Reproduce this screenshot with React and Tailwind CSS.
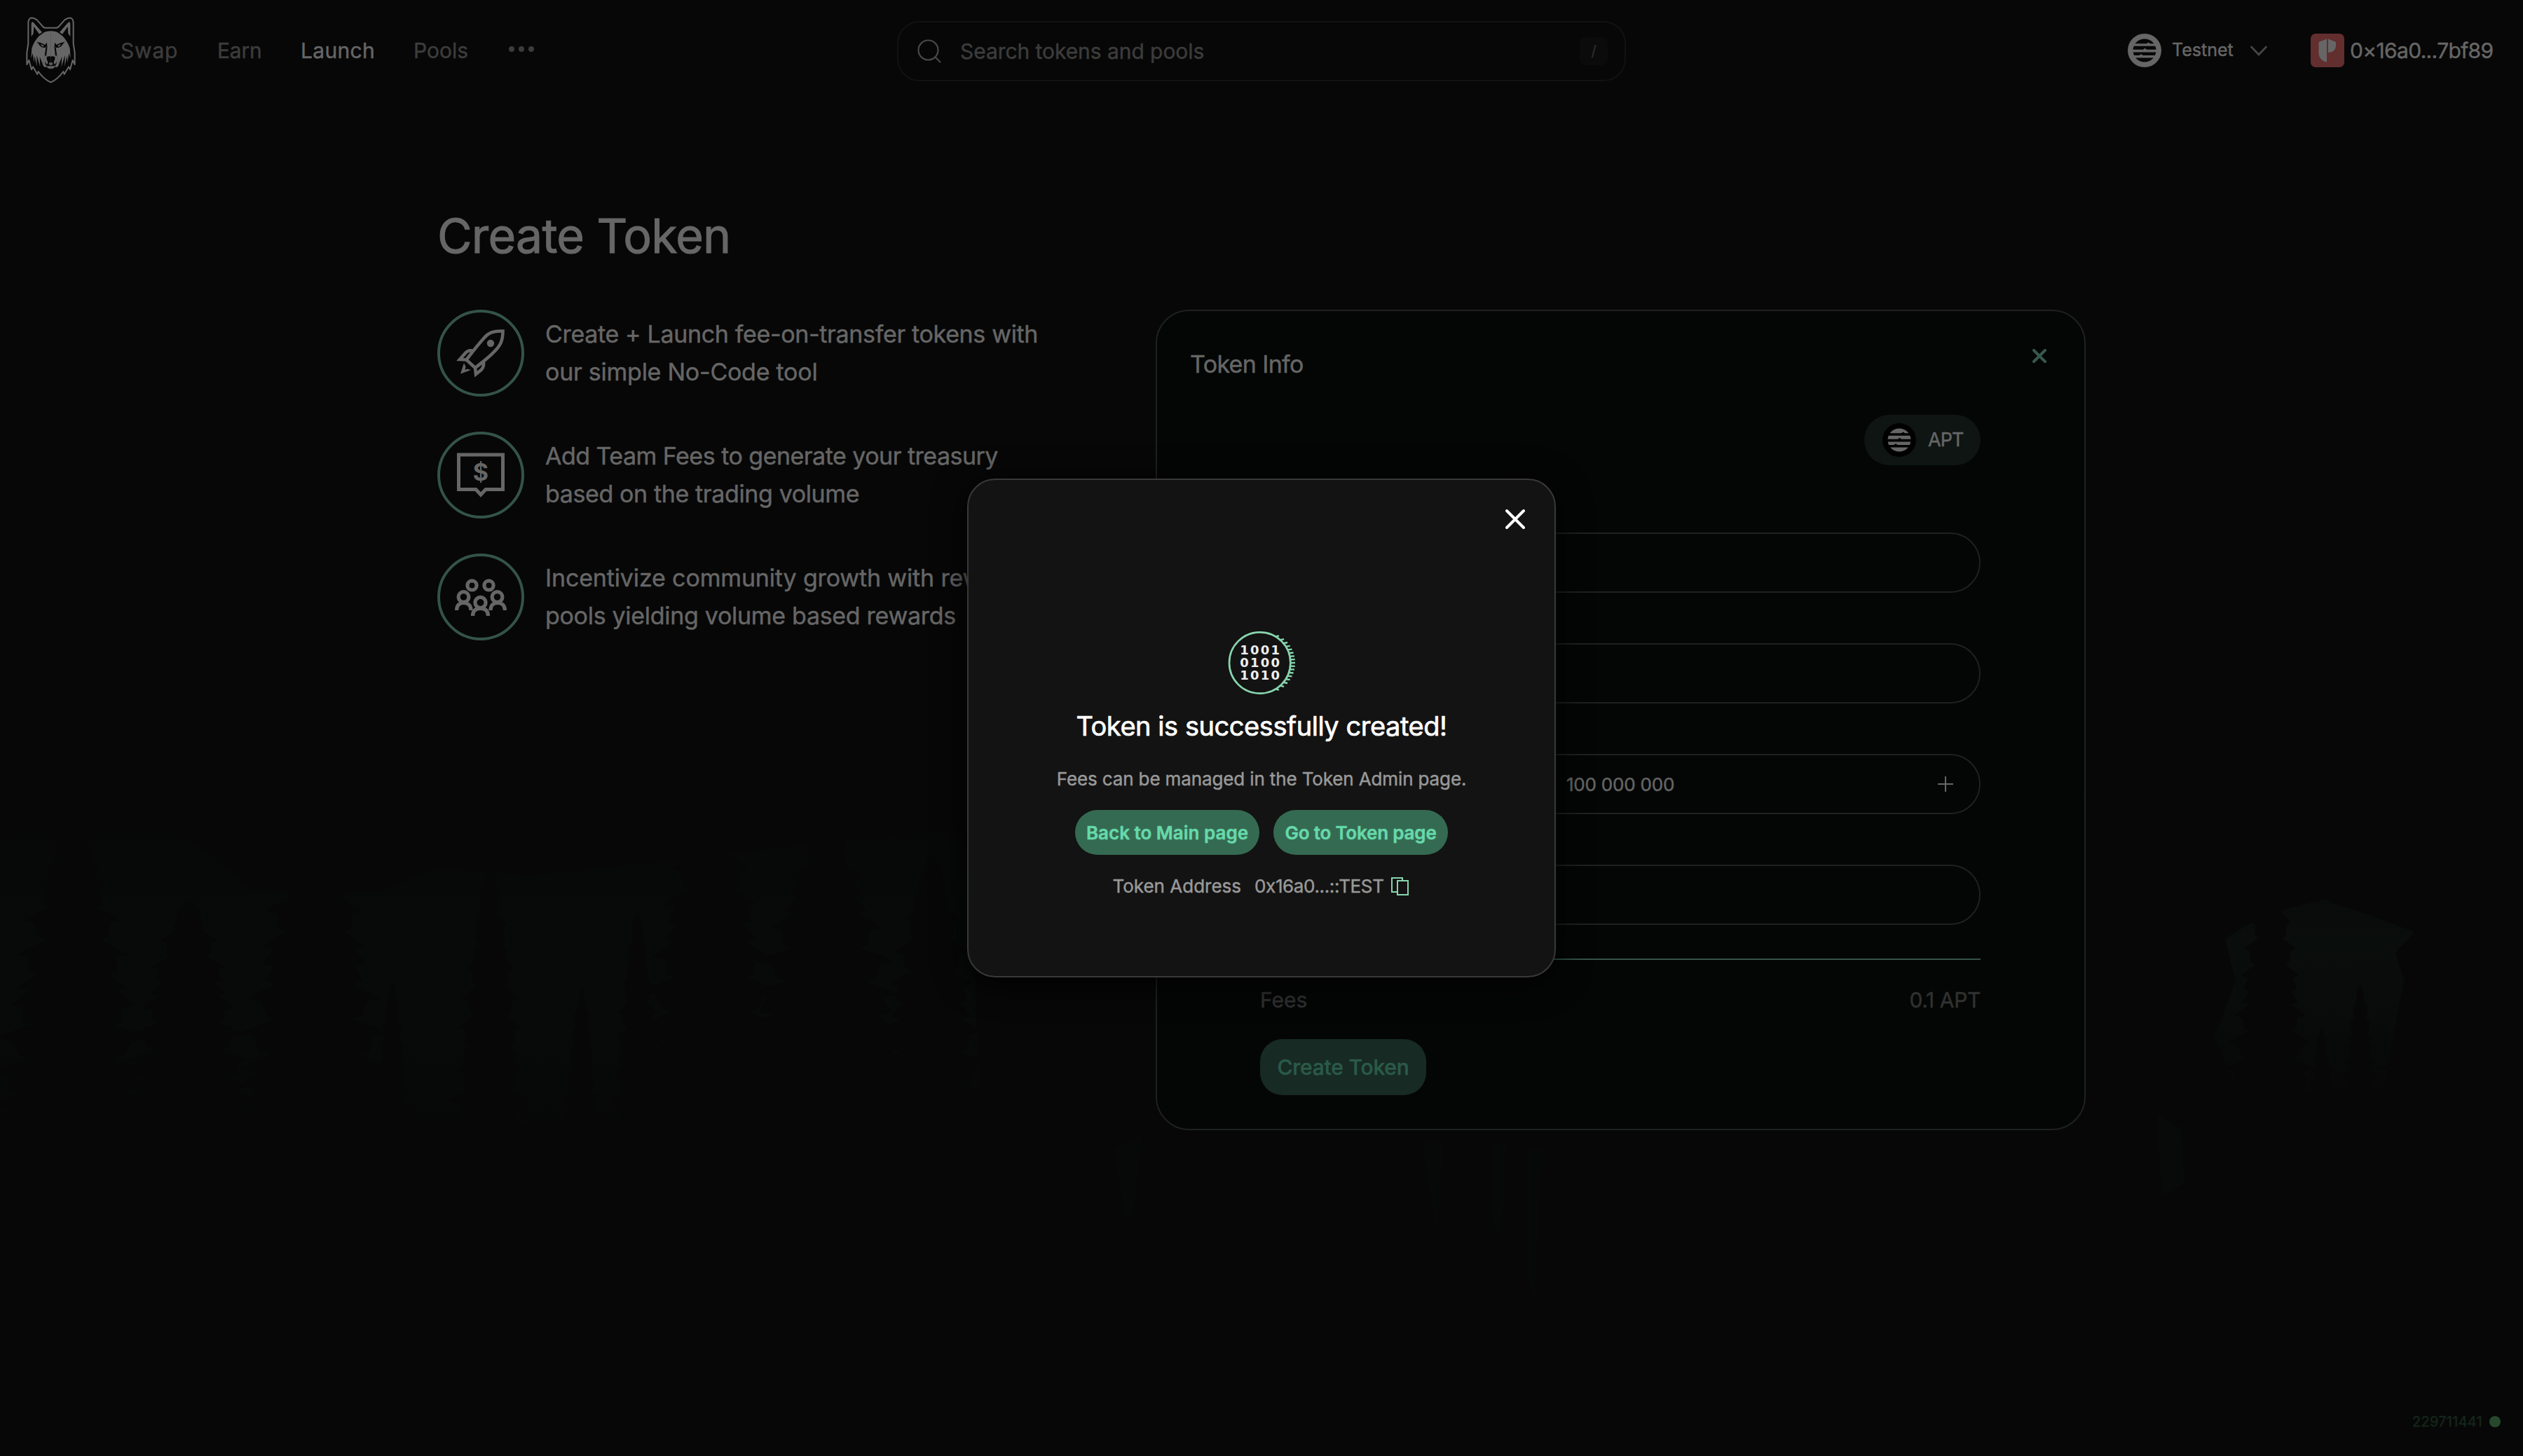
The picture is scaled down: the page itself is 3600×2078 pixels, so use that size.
import React from "react";

/* ---------- backdrop ---------- */

// Jagged conifer silhouette: apex at (x, y), growing to `w` wide over `h`.
function treePath(x, y, w, h) {
  const steps = 20;
  const left = [];
  const right = [];
  for (let i = 1; i <= steps; i++) {
    const wobble = 1 + 0.22 * Math.sin(i * 2.7 + x);
    const half = (w / 2) * Math.pow(i / steps, 0.6) * wobble;
    const yy = y + (h * i) / steps;
    left.unshift(`${x - half * 0.78},${yy + 4}`, `${x - half},${yy}`);
    right.push(`${x + half * 0.95},${yy}`, `${x + half * 0.74},${yy + 4}`);
  }
  return `M${x},${y} L${right.join(" L")} L${left.join(" L")} Z`;
}

const TREES = [
  [105, 1170, 240, 480],
  [270, 1285, 210, 380],
  [450, 1150, 240, 500],
  [560, 1400, 60, 260],
  [700, 1235, 110, 420],
  [830, 1410, 60, 260],
  [910, 1300, 80, 360],
  [1015, 1140, 240, 500],
  [1180, 1180, 290, 480],
  [1330, 1220, 180, 460],
  [2940, 1080, 420, 520],
  [3240, 1240, 130, 380],
  [3313, 1465, 46, 180],
  [3368, 1405, 60, 220],
  [3530, 1150, 270, 500],
];

function Backdrop() {
  return (
    <svg className="absolute inset-0 h-full w-full" viewBox="0 0 3600 2078" aria-hidden="true">
      <defs>
        <linearGradient id="fogL" x1="0" y1="0" x2="0" y2="1">
          <stop offset="0" stopColor="#070a09" stopOpacity="0" />
          <stop offset="0.35" stopColor="#070a09" />
          <stop offset="0.7" stopColor="#070a09" />
          <stop offset="1" stopColor="#070a09" stopOpacity="0" />
        </linearGradient>
        <linearGradient id="fogR" x1="0" y1="0" x2="0" y2="1">
          <stop offset="0" stopColor="#080b0a" />
          <stop offset="0.2" stopColor="#090d0b" />
          <stop offset="0.6" stopColor="#080b0a" />
          <stop offset="1" stopColor="#070707" />
        </linearGradient>
      </defs>
      <path d="M0 1160 L260 1190 L360 1270 L540 1275 L620 1240 L760 1250 L900 1235 L1380 1180 L1400 1600 L0 1620Z" fill="url(#fogL)" />
      <path d="M3175 1340 L3230 1305 L3315 1284 L3380 1306 L3445 1330 L3418 1360 L3430 1400 L3410 1500 L3400 1570 L3200 1570 L3160 1480 L3190 1400Z" fill="url(#fogR)" />
      {TREES.map((t, i) => (
        <path key={i} d={treePath(t[0], t[1], t[2], t[3])} fill="#070707" />
      ))}
      <path d="M3078 1590 L3112 1610 L3118 1690 L3084 1706Z" fill="#070a08" />
      <path d="M1590 1640 L1630 1620 L1616 1740 L1604 1730Z" fill="#070908" />
      <path d="M2030 1630 L2060 1630 L2050 1760 L2040 1700Z M2130 1630 L2150 1632 L2140 1780 L2130 1740Z M2180 1640 L2200 1640 L2190 1860 L2180 1820Z" fill="#070908" />
    </svg>
  );
}

/* ---------- logos and icons ---------- */

function WolfHalf() {
  return (
    <g>
      <path
        d="M182 83 H157 Q150 82 146 76 L122 49 Q104 37 94 42 Q85 47 85 64 L85 150 L79 190 L79 240 L88 222 L99 262 L105 250 L124 282 L128 270 Q150 302 182 317"
        fill="none"
        stroke="#666"
        strokeWidth="6"
        strokeLinejoin="round"
      />
      <path d="M98 66 Q99 54 107 60 L144 102 L132 110 L109 78 L107 108 L98 120Z" fill="#666" />
      <path
        d="M182 97 Q160 97 146 107 L130 119 Q108 144 100 170 L97 214 L104 192 L110 232 L112 204 L122 248 L121 200 L136 250 L134 206 L147 240 Q150 226 155 203 L160 168 L167 160 L162 203 L182 205Z"
        fill="#666"
      />
      <path d="M155 202 L147 240 Q150 252 160 252 L182 252 V204Z" fill="#666" />
      <path d="M121 143 Q140 146 157 156 L164 146 L166 160 L158 168 L150 168 Q134 164 130 152Z" fill="#070707" />
      <path d="M138 152 L153 160 L148 164 Q139 160 138 152Z" fill="#666" />
      <path d="M164 208 Q172 203 182 206 V236 L178 230 Q170 236 176 242 L182 242 V246 H164 Q154 240 158 226 Q160 238 166 240 Q170 236 168 226 L164 220Z" fill="#070707" />
      <path d="M182 248 H160 Q168 260 182 260Z" fill="#070707" />
      <path d="M182 249 H163 Q170 259 182 259Z" fill="#666" />
    </g>
  );
}

function WolfLogo() {
  return (
    <svg className="h-[120px] w-[120px] shrink-0" viewBox="0 0 360 360">
      <WolfHalf />
      <g transform="translate(363 0) scale(-1 1)">
        <WolfHalf />
      </g>
    </svg>
  );
}

function AptosMark({ disc, inner, line }) {
  return (
    <svg className="h-12 w-12 shrink-0" viewBox="0 0 48 48">
      <circle cx="24" cy="24" r="24" fill={disc} />
      <circle cx="24" cy="24" r="16.5" fill={inner} />
      <g fill={line}>
        <path d="M8 14.2 H27 L29.5 12.4 L32 14.2 H40 V17.8 H8Z" />
        <path d="M6.5 22.8 H22 L24.5 20.8 L27 22.8 H41.5 V26.4 H6.5Z" />
        <path d="M8 31 H16.5 L19 29 L21.5 31 H40 V34.6 H8Z" />
      </g>
    </svg>
  );
}

function WalletMark() {
  return (
    <svg className="h-12 w-12 shrink-0" viewBox="0 0 48 48">
      <rect width="48" height="48" rx="7" fill="#632e2e" />
      <path d="M11.5 12 L23 7.5 V40.5 C15.5 39.5 11.5 33.5 11.5 27.5Z" fill="#666" />
      <path d="M25 7.5 L36 12 V16.5 C36 23.5 31.5 27 25 27Z" fill="#666" />
    </svg>
  );
}

function RocketIcon() {
  return (
    <svg className="h-[68px] w-[68px] overflow-visible" viewBox="0 0 68 68" fill="none" stroke="#666" strokeWidth="4.6">
      <path d="M65.5 2.5 C52 2 45 5 39 12 C30 22 23 31 13.5 43.5 L26 55 C36 47 46 40 54 31 C62 23 65.5 16 65.5 2.5Z" />
      <circle cx="48" cy="20" r="5.2" fill="#666" stroke="none" />
      <path d="M24 31 C18 29 14 31 11 35 L4 43 L14 43.5" />
      <path d="M37.5 45 C39 50 38 54 35 57.5 L27 64 L26 55" />
      <path d="M10 48 L5 63.5 L20 58 L14.5 56.5 L11.5 58 L12.5 53.5Z" fill="#666" stroke="none" />
    </svg>
  );
}

function TreasuryIcon() {
  return (
    <svg className="h-[68px] w-[68px]" viewBox="0 0 68 68">
      <path d="M2.5 5 H65.5 V54.5 H41 L34 62 L27 54.5 H2.5Z" fill="none" stroke="#666" strokeWidth="5" />
      <text x="34" y="42" textAnchor="middle" fontSize="34" className="fill-[#666] font-['Inter',sans-serif] font-bold">
        $
      </text>
    </svg>
  );
}

function CommunityIcon() {
  return (
    <svg className="h-[53px] w-[74px]" viewBox="0 0 74 53" fill="none" stroke="#666" strokeWidth="5.2">
      <circle cx="24.5" cy="9.4" r="6.6" />
      <circle cx="48.5" cy="9.4" r="6.6" />
      <circle cx="12.5" cy="26" r="7.4" />
      <circle cx="60.5" cy="26" r="7.4" />
      <circle cx="36.5" cy="34" r="7.6" />
      <path d="M2.6 45 C2.6 38 6 34.5 12.5 34.5 C19 34.5 23 38 23 45" />
      <path d="M51 45 C51 38 54.5 34.5 61 34.5 C67.5 34.5 71.4 38 71.4 45" />
      <path d="M25.5 53 C25.5 46 29.5 42.5 36.5 42.5 C43.5 42.5 47.5 46 47.5 53" />
    </svg>
  );
}

function CoinIcon() {
  const teeth = [];
  for (let i = -8; i <= 8; i++) {
    const y = 168 + i * 14.5;
    const x = 173 + Math.sqrt(132 * 132 - (y - 168) * (y - 168));
    teeth.push(<path key={i} d={`M${x - 14} ${y - i} L${x + 19} ${y}`} stroke="#88d5ae" strokeWidth="7" />);
  }
  return (
    <svg className="h-[120px] w-[120px] shrink-0" viewBox="0 0 360 360">
      {teeth}
      <circle cx="173" cy="168" r="131" fill="#131313" stroke="#88d5ae" strokeWidth="8" />
      <g className="fill-[#eee] font-['DejaVu_Sans',sans-serif] font-bold" fontSize="54">
        <text x="88" y="132" textLength="170">1001</text>
        <text x="88" y="186" textLength="170">0100</text>
        <text x="88" y="241" textLength="170">1010</text>
      </g>
    </svg>
  );
}

function Cross({ className, size, width }) {
  return (
    <svg className={className} viewBox={`0 0 ${size} ${size}`} fill="none" stroke="currentColor" strokeWidth={width} strokeLinecap="round">
      <path d={`M2 2 L${size - 2} ${size - 2} M${size - 2} 2 L2 ${size - 2}`} />
    </svg>
  );
}

/* ---------- page sections ---------- */

function Header() {
  return (
    <header className="flex h-36 items-center text-[30px]">
      <div className="flex w-[1280px] items-center pl-3">
        <WolfLogo />
        <nav className="ml-10 flex items-center text-[#3c3c3c]">
          <a className="w-[138px] tracking-[0.79px]">Swap</a>
          <a className="w-[119px] tracking-[-0.2px]">Earn</a>
          <a className="w-[161px] tracking-[0.32px] text-[#666]">Launch</a>
          <a className="w-[136px]">Pools</a>
          <svg className="-mt-1 h-2 w-9" viewBox="0 0 36 8" fill="currentColor">
            <circle cx="4" cy="4" r="4" />
            <circle cx="18" cy="4" r="4" />
            <circle cx="32" cy="4" r="4" />
          </svg>
        </nav>
      </div>
      <div className="relative top-px flex h-[86px] w-[1040px] items-center rounded-[32px] border-2 border-[#121212] pr-6 pl-[27px]">
        <svg className="h-[34px] w-[34px]" viewBox="0 0 34 34" fill="none" stroke="#484848" strokeWidth="2.2" strokeLinecap="round">
          <circle cx="15.5" cy="15.5" r="14" />
          <path d="M25.5 25.5 L32.5 32.5" />
        </svg>
        <span className="ml-[27px] flex-1 tracking-[-0.06px] text-[#3c3c3c]">Search tokens and pools</span>
        <kbd className="flex h-10 w-10 items-center justify-center rounded-lg bg-[#0b0b0b] font-['Inter',sans-serif] text-[20px] text-[#2c2c2c]">/</kbd>
      </div>
      <div className="flex flex-1 items-center pl-[716px] text-[#666]">
        <AptosMark disc="#666" inner="#070707" line="#666" />
        <span className="ml-[15px] w-[112px] text-[25px]">Testnet</span>
        <svg className="h-[15px] w-6" viewBox="0 0 24 15" fill="none" stroke="#474747" strokeWidth="2.6" strokeLinecap="round">
          <path d="M1.5 2 L12 13 L22.5 2" />
        </svg>
        <span className="ml-[62px] flex items-center">
          <WalletMark />
          <span className="ml-2 tracking-[-0.66px]">0×16a0...7bf89</span>
        </span>
      </div>
    </header>
  );
}

function Feature({ icon, lines, tracking }) {
  return (
    <li className="flex items-center gap-[30px]">
      <span className="flex h-[124px] w-[124px] shrink-0 items-center justify-center rounded-full border-4 border-[#34534a]">{icon}</span>
      <p className="text-[34px] leading-[54px] whitespace-nowrap text-[#666]">
        <span className={`block ${tracking[0]}`}>{lines[0]}</span>
        <span className={`block ${tracking[1]}`}>{lines[1]}</span>
      </p>
    </li>
  );
}

function Field({ className = "", children }) {
  return <div className={`h-[86px] rounded-[43px] border-2 border-[#1f2120] ${className}`}>{children}</div>;
}

function TokenCard() {
  return (
    <section className="relative h-[1171px] w-[1327px] rounded-[48px] border-2 border-[#1f2120] bg-[#040605] pt-[54px]">
      <div className="flex h-11 items-start justify-between pr-[54px] pl-[47px]">
        <h2 className="text-[34px] leading-[44px] tracking-[-0.65px] text-[#666]">Token Info</h2>
        <Cross className="h-5 w-5 text-[#36594c]" size={20} width={4} />
      </div>
      <div className="mt-[50px] flex flex-col pr-[148px] pl-[147px]">
        <div className="flex h-[72px] w-[166px] items-center self-end rounded-[36px] bg-[#0e1513] pl-[26px]">
          <AptosMark disc="#000" inner="#666" line="#000" />
          <span className="ml-[17px] text-[27px] tracking-[-0.9px] text-[#666]">APT</span>
        </div>
        <div className="mt-24 flex flex-col gap-[72px]">
          <Field />
          <Field />
          <Field className="flex items-center justify-between px-[37px] text-[#666]">
            <svg className="h-[22px] w-[22px]" viewBox="0 0 22 22" stroke="currentColor" strokeWidth="2">
              <path d="M0 11 H22" />
            </svg>
            <span className="text-[26px] tracking-[-0.2px]">100 000 000</span>
            <svg className="h-[22px] w-[22px]" viewBox="0 0 22 22" stroke="currentColor" strokeWidth="2">
              <path d="M0 11 H22 M11 0 V22" />
            </svg>
          </Field>
          <Field />
        </div>
        <hr className="mt-12 h-0.5 border-0 bg-[#35524a]" />
        <div className="mt-[37px] flex h-10 items-center justify-between text-[30px] text-[#303130]">
          <span>Fees</span>
          <span className="tracking-[-0.37px]">0.1 APT</span>
        </div>
        <button className="mt-9 h-20 w-[237px] rounded-[32px] bg-[#172a23] text-[30px] font-medium tracking-[-0.2px] text-[#2a5a49]">
          Create Token
        </button>
      </div>
    </section>
  );
}

function SuccessModal() {
  return (
    <div className="absolute inset-0 flex items-center justify-center">
      <div className="relative flex h-[712px] w-[840px] flex-col items-center rounded-[40px] border-2 border-[#393939] bg-[#131313] pt-[205px] shadow-[0_8px_48px_rgba(0,0,0,0.9)]">
        <Cross className="absolute top-[42px] right-[42px] h-7 w-7 text-white" size={28} width={4} />
        <CoinIcon />
        <h3 className="mt-0.5 text-[38px] leading-[48px] tracking-[-0.45px] text-white [-webkit-text-stroke:0.7px]">Token is successfully created!</h3>
        <p className="mt-9 text-[26px] leading-8 tracking-[-0.13px] text-[#999]">Fees can be managed in the Token Admin page.</p>
        <div className="mt-7 flex gap-5 text-[26px] font-semibold text-[#66d9ab]">
          <button className="h-16 w-[263px] rounded-full bg-[#356a52]">Back to Main page</button>
          <button className="h-16 w-[249px] rounded-full bg-[#356a52] tracking-[-0.19px]">Go to Token page</button>
        </div>
        <div className="mt-[29px] mr-0.5 flex items-center text-[26px] leading-8 text-[#999]">
          <span>Token Address</span>
          <span className="ml-[19px] tracking-[-0.37px]">0x16a0...::TEST</span>
          <svg className="ml-[10px] h-[26px] w-[26px]" viewBox="0 0 26 26" fill="none" stroke="#88d5ae" strokeWidth="2">
            <path d="M16 4.5 V1 H1 V21 H8" />
            <rect x="9" y="5" width="15" height="20" />
          </svg>
        </div>
      </div>
    </div>
  );
}

export default function App() {
  return (
    <div className="relative h-[2078px] w-[3600px] overflow-hidden bg-[#070707] font-['Inter',sans-serif] [-webkit-text-stroke:0.45px]">
      <Backdrop />
      <div className="relative flex h-full flex-col">
        <Header />
        <main className="flex-1 pt-[152px] pl-[624px]">
          <h1 className="text-[68px] leading-[80px] tracking-[-0.8px] text-[#666] [-webkit-text-stroke:1px]">Create Token</h1>
          <div className="mt-[66px] flex">
            <ul className="flex w-[1025px] flex-col gap-[50px]">
              <Feature
                icon={<RocketIcon />}
                lines={["Create + Launch fee-on-transfer tokens with", "our simple No-Code tool"]}
                tracking={["tracking-[-0.34px]", "tracking-[-0.25px]"]}
              />
              <Feature
                icon={<TreasuryIcon />}
                lines={["Add Team Fees to generate your treasury", "based on the trading volume"]}
                tracking={["tracking-[-0.52px]", "tracking-[-0.38px]"]}
              />
              <Feature
                icon={<CommunityIcon />}
                lines={["Incentivize community growth with reward", "pools yielding volume based rewards"]}
                tracking={["tracking-[-0.15px]", "tracking-[-0.3px]"]}
              />
            </ul>
            <TokenCard />
          </div>
        </main>
        <footer className="flex h-[98px] items-center justify-end gap-2.5 pr-8">
          <span className="text-[20px] tracking-[0.26px] text-[#15261b]">229711441</span>
          <span className="h-4 w-4 rounded-full bg-[#27482d]" />
        </footer>
      </div>
      <SuccessModal />
    </div>
  );
}
